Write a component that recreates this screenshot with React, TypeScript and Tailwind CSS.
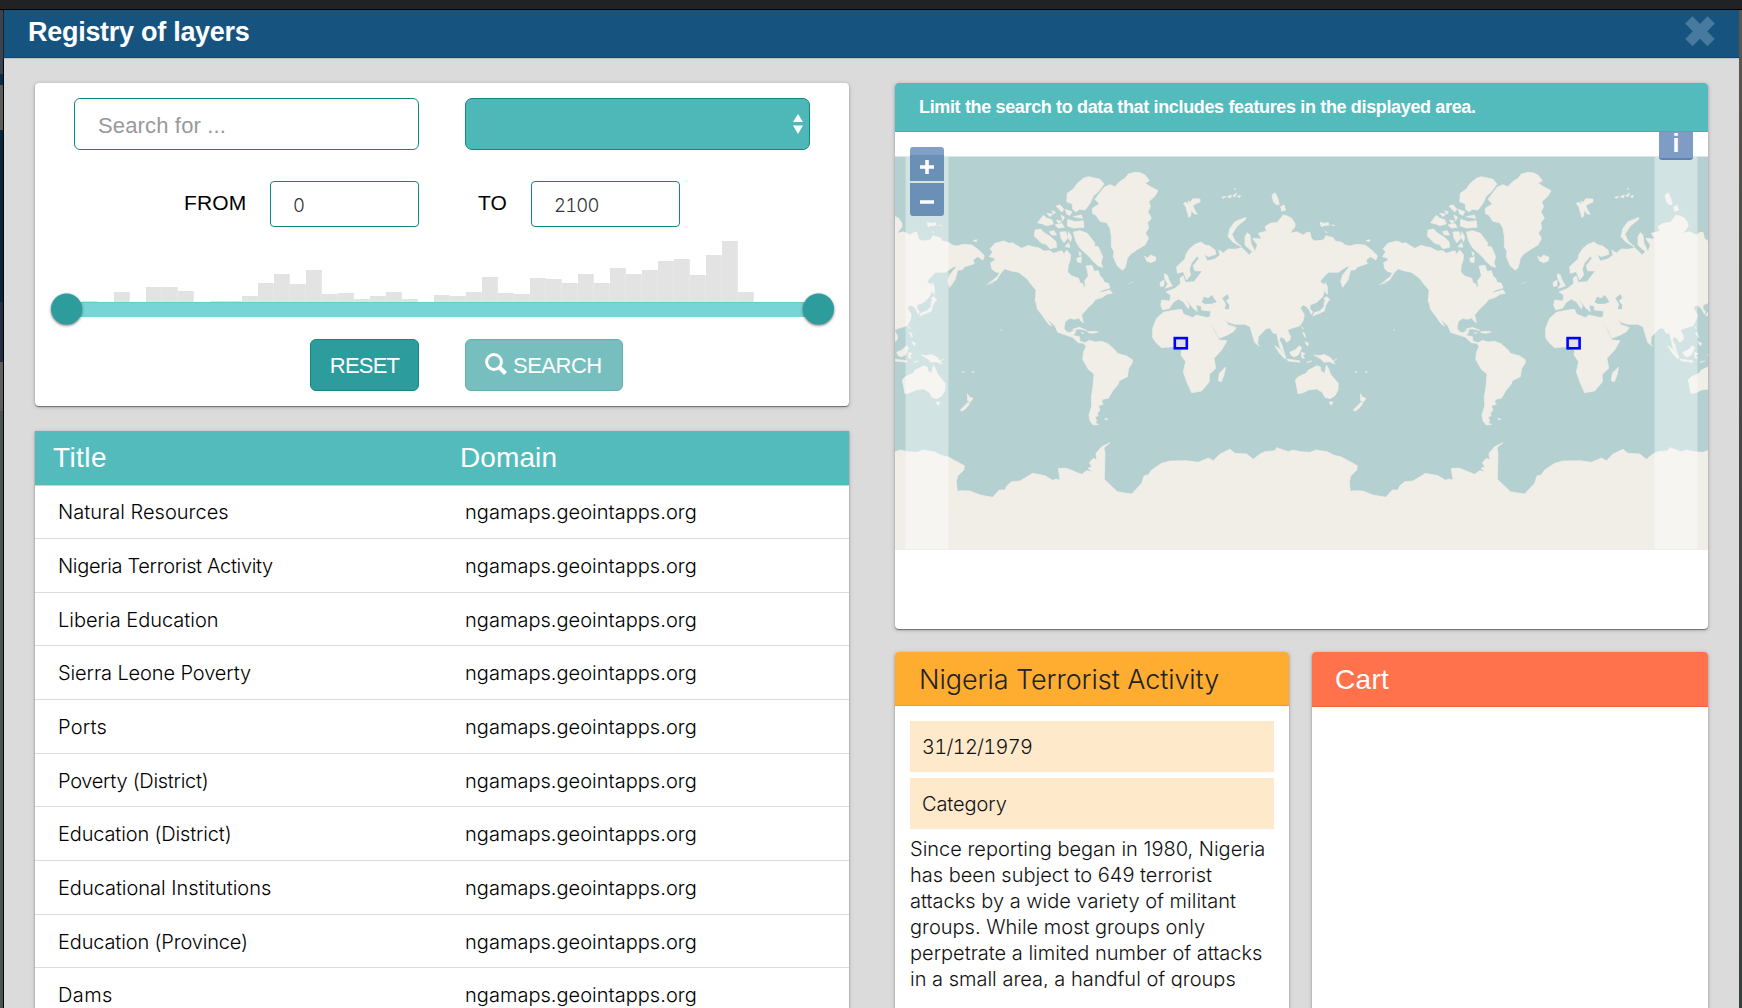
import type { ReactNode } from "react";

const HISTOGRAM = [
  0, 1, 0, 10, 0, 15, 15, 11.5, 0, 1, 1, 6, 19.5, 28.5, 18.5, 32, 8, 9.5, 3.5, 6, 10.5, 3.5, 0, 7, 6, 10, 25, 9, 8,
  24, 23, 19.5, 28.5, 19.5, 34.5, 28.5, 32, 41, 43.5, 27.5, 47, 61.5, 10.5, 0, 0, 0, 0,
];

const LAYERS = [
  { title: "Natural Resources", tracking: "tracking-[0.02px]" },
  { title: "Nigeria Terrorist Activity", tracking: "tracking-[-0.33px]" },
  { title: "Liberia Education", tracking: "tracking-[0px]" },
  { title: "Sierra Leone Poverty", tracking: "tracking-[-0.1px]" },
  { title: "Ports", tracking: "tracking-[0.2px]" },
  { title: "Poverty (District)", tracking: "tracking-[-0.28px]" },
  { title: "Education (District)", tracking: "tracking-[-0.15px]" },
  { title: "Educational Institutions", tracking: "tracking-[-0.03px]" },
  { title: "Education (Province)", tracking: "tracking-[-0.15px]" },
  { title: "Dams", tracking: "tracking-[0.4px]" },
];

const CARD = "bg-white shadow-[0_1px_1px_rgba(0,0,0,0.4),0_1px_4px_rgba(0,0,0,0.25)]";

/* One copy of the world, drawn on a grid of three units per pixel. */
function World() {
  return (
    <g fill="#f1eee8" stroke="#f1eee8" strokeWidth="2" strokeLinejoin="round">
      {/* North America */}
      <path d="M330,566L345,550 372,543 388,550 398,548 410,556 425,565 445,556 458,560 475,563 492,573 510,572 520,580 545,572 552,582 560,570 572,585 570,602 565,615 563,636 575,648 596,655 600,668 609,672 611,684 616,678 614,662 625,648 622,632 618,618 636,616 642,634 655,632 660,648 668,655 672,666 685,670 690,684 668,690 655,700 690,690 697,700 680,703 668,712 648,718 640,726 466,726 468,690 455,675 440,655 415,637 395,633 385,630 375,626 362,640 350,660 325,671 354,648 358,638 345,635 335,626 332,608 346,600 340,593 328,590 338,576z" />
      <path d="M562,400L580,387 592,370 612,354 625,350 640,353 660,358 672,372 655,395 640,408 630,430 615,450 598,448 588,456 578,448 577,432 560,425z" />
      <path d="M580,516L600,512 622,520 645,550 642,558 655,560 668,590 663,608 668,622 655,618 640,605 628,590 615,578 600,565 588,545z" />
      <path d="M465,510L482,507 492,518 512,530 528,545 530,562 510,566 498,553 485,550 470,535 463,528z" />
      <path d="M473,488L490,466 500,474 516,480 520,492 500,497 488,492zM563,478L585,485 610,482 612,502 580,504 562,498zM528,438L540,434 552,448 545,456zM556,448L576,455 570,466 560,462zM543,465L554,472 548,482zM500,460L518,462 510,470zM515,452L526,456 522,463zM540,516L558,515 563,535 552,548 543,535zM525,495L545,490 553,502 535,504zM566,515L575,530 572,545 563,530zM555,560L566,548 570,562zM508,515L522,512 530,525 515,525zM590,595L604,590 603,608 592,605zM580,470L604,465 608,475zM530,480L545,484 535,490zM596,575L604,580 600,588z" />
      {/* Greenland, Iceland */}
      <path d="M672,382L690,374 705,380 718,366 735,355 745,342 765,337 780,338 795,345 808,362 795,370 812,380 834,392 825,408 806,425 812,440 804,455 814,475 803,488 806,505 796,520 806,535 795,555 770,570 752,582 742,595 736,622 727,631 712,618 700,590 702,575 694,560 694,530 690,505 680,488 660,484 648,466 637,460 637,445 658,432 645,418z" />
      <path d="M794,588L802,594 812,585 828,592 826,602 812,608 800,603z" />
      {/* Central and South America */}
      <g transform="translate(0 720)">
        <path d="M466,-5L645,-5 640,8 622,25 605,45 610,68 602,62 597,54 582,58 570,55 556,64 552,85 560,96 570,98 588,87 585,100 578,106 598,110 600,124 616,128 628,121 645,126 665,124 685,132 705,150 712,160 740,168 758,180 756,190 746,205 742,230 718,242 715,252 700,270 685,295 668,298 665,306 670,312 655,318 660,330 652,340 654,348 645,350 650,362 646,370 656,373 640,375 630,362 627,345 635,318 634,290 639,260 642,222 625,208 608,178 611,155 618,140 612,130 595,128 578,112 560,106 533,97 525,78 508,62 498,50 515,78 505,72 488,48 472,27z" />
        <path d="M578,88L598,82 620,91 600,87zM622,95L638,94 655,96 640,100 625,98zM604,98L612,100zM674,356L684,357 678,360z" />
      </g>
      {/* Europe, Asia, Africa and Oceania */}
      <g transform="translate(720 285)">
        <path d="M170,335L195,312 198,298 210,280 225,268 243,261 255,270 268,272 285,285 288,298 265,305 252,298 262,318 285,312 300,300 296,285 310,294 325,282 345,283 365,278 378,290 388,300 397,290 375,270 375,245 382,233 390,240 393,265 405,290 412,270 398,250 425,252 415,235 440,228 435,215 450,205 472,202 490,180 500,182 515,190 525,205 525,215 510,235 530,230 550,240 560,232 570,232 575,252 585,258 610,255 618,242 640,248 645,258 665,262 675,270 690,273 708,268 735,270 755,285 772,302 768,315 752,305 738,315 742,326 712,336 705,345 692,345 684,375 668,397 662,378 668,360 690,333 680,335 665,345 655,352 625,352 612,365 600,380 615,390 616,400 608,425 590,442 570,450 570,462 578,470 574,478 568,465 560,455 550,450 541,458 553,480 550,495 540,512 515,520 502,525 512,545 510,555 500,562 492,550 482,545 478,555 486,570 494,598 480,578 470,535 460,535 450,519 438,521 415,545 413,570 404,562 390,515 375,508 345,508 325,502 313,490 325,510 334,512 349,518 340,530 322,540 297,550 285,525 265,495 262,488 271,484 272,468 245,465 243,452 228,450 232,470 218,458 195,428 208,452 205,462 190,440 175,432 160,442 148,460 128,465 122,450 125,435 150,438 152,420 138,411 165,400 182,385 180,370 190,362 196,382 222,380 247,348 224,347 220,332 237,310 232,303 214,325 208,342 212,360 200,375 190,350 172,355z" />
        <path d="M130,472L160,466 185,463 190,477 218,488 228,480 262,488 280,522 297,555 321,557 305,585 282,610 287,640 268,658 268,680 245,708 215,713 200,680 190,650 197,620 183,600 185,583 160,575 125,578 110,565 98,548 98,520 110,490z" />
        <path d="M298,655L317,636 312,660 304,680 295,677zM133,356L142,360 147,375 157,393 135,400 143,388 134,370zM120,383L132,375 132,392 122,395z" />
        <path d="M190,145L198,142 206,150 204,138 212,142 218,131 240,132 240,141 228,146 218,152 224,165 232,178 222,176 214,166 212,182 207,188 202,172 198,156zM305,127L318,124 312,130zM322,125L334,120 332,129zM338,122L350,114 345,126zM352,124L362,121 358,128zM342,101L348,103zM324,245L330,220 345,200 378,187 376,194 352,213 336,238 345,258 365,276 340,262zM456,120L465,113 473,128 478,148 470,150 460,140zM482,155L492,150 497,165 485,169zM600,202L612,205 625,203 628,210 612,212 604,215zM635,210L645,212zM738,257L750,254 748,260zM615,230L622,232z" />
        <path d="M578,483L583,473 600,468 612,455 613,440 626,436 617,452 613,468 600,474zM612,430L620,425 630,434 618,440zM616,382L622,395 623,418 616,412z" />
        <path d="M464,572L480,583 498,605 495,612 478,594zM500,612L538,617 540,622 505,618zM509,592L525,585 538,572 545,578 535,600 522,606 513,600zM545,592L556,596 548,600 553,610 545,608zM547,532L554,535 556,548zM555,560L566,565 562,573zM545,515L550,522zM582,600L600,602 612,598 632,608 645,627 628,620 612,622 600,610zM650,612L640,618zM560,622L575,618zM412,568L419,573zM705,650L712,652zM735,652L742,650zM820,523L824,526z" />
        <path d="M526,675L535,665 558,655 565,645 580,638 590,632 601,636 603,648 614,655 619,630 625,640 632,658 642,670 655,685 654,705 645,722 630,731 615,727 607,712 590,702 565,705 550,713 534,716z" />
        <path d="M627,741L639,741 634,751zM721,716L728,727 738,730 730,742 722,737zM700,765L724,741 728,746 715,762 704,769z" />
        <g fill="#b5d0d0" stroke="none">
          <path d="M245,442L252,425 265,430 275,420 282,430 290,441 275,446 255,447z" />
          <path d="M307,430L322,418 328,428 318,438 328,450 327,463 314,462 318,448z" />
        </g>
      </g>
      {/* Chains of small islands */}
      <path d="M760,665L745,672M1520,669L1496,674M1345,900L1362,905" fill="none" strokeWidth="1.5" />
      {/* Antarctica */}
      <path
        transform="translate(0 720)"
        d="M228,747L230,575 240,572 270,573 300,585 338,592 358,570 375,570 380,558 395,545 420,543 458,520 495,527 518,541 528,537 540,541 535,505 560,505 585,515 605,523 620,512 637,515 624,505 635,500 628,488 640,475 650,480 648,460 665,440 690,428 672,443 675,460 673,538 712,575 735,579 755,582 785,550 792,528 805,524 815,510 845,490 870,483 920,482 955,487 985,474 1000,482 1020,462 1050,448 1065,460 1100,462 1120,478 1140,462 1155,455 1185,452 1190,443 1225,455 1240,450 1262,455 1289,457 1309,450 1344,456 1360,465 1384,471 1432,497 1430,510 1412,528 1408,545 1411,575 1411,747z"
      />
    </g>
  );
}

function WorldMap() {
  return (
    <svg className="block h-[418px] w-full" viewBox="0 0 813 418" preserveAspectRatio="none">
      <defs>
        <clipPath id="extent">
          <rect x="0" y="24.5" width="813" height="392.8" />
        </clipPath>
      </defs>
      <rect x="0" y="24.5" width="813" height="392.8" fill="#b5d0d0" />
      <g clipPath="url(#extent)">
        {[-408, -15, 378, 771].map((x) => (
          <g key={x} transform={`translate(${x} -72) scale(0.33333)`}>
            <World />
          </g>
        ))}
        <rect x="10.5" y="24" width="43" height="394" fill="#fff" fillOpacity="0.4" />
        <rect x="759.5" y="24" width="43" height="394" fill="#fff" fillOpacity="0.4" />
      </g>
      {[279.8, 672.6].map((x) => (
        <rect key={x} x={x} y="206.1" width="12" height="10.2" fill="#e2dfec" stroke="#00f" strokeWidth="2.6" />
      ))}
    </svg>
  );
}

function YearField({ label, value, labelClass }: { label: string; value: string; labelClass: string }) {
  return (
    <div className="flex items-center">
      <span className={`pb-[3px] text-[21px] text-black ${labelClass}`}>{label}</span>
      <div className="flex h-[46px] w-[149px] items-center rounded-[4px] border-[1.5px] border-[#118785] pt-[4px] pl-[22px] text-[18.5px] font-light text-[#333] font-['Inter']">
        <span className="tracking-[-0.8px] tabular-nums">{value}</span>
      </div>
    </div>
  );
}

function MapButton({ children, className }: { children: ReactNode; className: string }) {
  return <div className={`flex w-[34px] items-center justify-center ${className}`}>{children}</div>;
}

export default function App() {
  return (
    <div className="flex h-[1008px] w-[1742px] flex-col overflow-hidden bg-[#222] font-['Liberation_Sans',Arial,sans-serif]">
      <div className="h-[10px] shrink-0 border-b border-black bg-[#212223]" />
      <div className="flex min-h-0 flex-1">
        <div className="flex w-[4px] shrink-0 flex-col border-r border-black">
          <div className="h-[64px] bg-[#3a444f]" />
          <div className="h-[11px] bg-[#0b2c48]" />
          <div className="h-[45px] bg-[#5d5a57]" />
          <div className="h-[172px] bg-[#0a243c]" />
          <div className="h-[60px] bg-[#1f3043]" />
          <div className="h-[49px] bg-[#5f5d5b]" />
          <div className="flex-1 bg-[#48524f]" />
        </div>

        <div className="flex w-[1735px] shrink-0 flex-col bg-[#dbdbdb]">
          <header className="flex h-[48px] shrink-0 items-center justify-between border-b border-[#0a4577] bg-[#16547f] pr-[24px] pl-[24px] shadow-[0_1px_1px_#c4c4c4]">
            <h1 className="pb-[2px] text-[27px] font-bold tracking-[-0.28px] text-white">Registry of layers</h1>
            <svg className="mb-[6px] h-[30px] w-[30px]" viewBox="0 0 30 30">
              <path
                d="M7.5 .8L15 8.4 22.5.8 29.3 7.4 21.8 15.3 29.3 23 22.5 29.8 15 22.2 7.5 29.8.7 23 8.2 15.3.7 7.4z"
                fill="#477a9e"
                stroke="#477a9e"
                strokeLinejoin="round"
              />
            </svg>
          </header>

          <div className="flex gap-[46px] pt-[25px] pl-[31px]">
            <div className="w-[814px] shrink-0">
              <section className={`mb-[25px] flex h-[323px] flex-col rounded-[4px] pt-[15px] ${CARD}`}>
                <div className="flex gap-[46px] pl-[39px]">
                  <div className="flex h-[52px] w-[345px] items-center rounded-[6px] border-[1.5px] border-[#118785] pt-[3px] pl-[23px] text-[22px] tracking-[0.15px] text-[#999]">
                    Search for ...
                  </div>
                  <div className="flex h-[52px] w-[345px] items-center justify-end rounded-[7px] border-[1.5px] border-[#118785] bg-[#4eb8b9] pr-[6px]">
                    <svg className="h-[20px] w-[10px]" viewBox="0 0 10 20" fill="#fff">
                      <path d="M5 0L10 8H0zM5 20L0 11.5H10z" />
                    </svg>
                  </div>
                </div>
                <div className="mt-[31px] flex gap-[59px] pl-[149px]">
                  <YearField label="FROM" value="0" labelClass="w-[86px] tracking-[0.1px]" />
                  <YearField label="TO" value="2100" labelClass="w-[53px] tracking-[0px]" />
                </div>
                <div className="mt-[13px] flex h-[62px] items-end pl-[31px]">
                  {HISTOGRAM.map((h, i) => (
                    <div key={i} className="w-[16px] border-r border-[#e8e8e8] bg-[#e3e3e3]" style={{ height: h }} />
                  ))}
                </div>
                <div className="ml-[31px] flex h-[15px] w-[752px] items-center justify-between border-t border-[#6cc9c9] bg-[#77d5d5]">
                  <div className="-ml-[15.5px] h-[31px] w-[31px] -translate-y-[1.5px] rounded-full bg-[#2d9c9c] shadow-[0_1px_3px_rgba(0,0,0,0.55)]" />
                  <div className="-mr-[15.5px] h-[31px] w-[31px] -translate-y-[1.5px] rounded-full bg-[#2d9c9c] shadow-[0_1px_3px_rgba(0,0,0,0.55)]" />
                </div>
                <div className="mt-[22px] flex gap-[46px] pl-[275px] text-[22px] tracking-[-0.8px] text-white">
                  <button className="h-[52px] w-[109px] rounded-[6px] border border-[#118785] bg-[#2d9c9c]">
                    RESET
                  </button>
                  <button className="flex h-[52px] w-[158px] items-center rounded-[6px] border border-[#5fb0b0] bg-[#77bebe] pl-[19px]">
                    <svg className="mr-[6px] mb-[2px] h-[22px] w-[22px]" viewBox="0 0 22 22" fill="none" stroke="#fff">
                      <circle cx="9" cy="9" r="7.4" strokeWidth="3" />
                      <path d="M14.5 14.5L20.5 20.5" strokeWidth="4" />
                    </svg>
                    <span className="tracking-[-0.5px]">SEARCH</span>
                  </button>
                </div>
              </section>

              <section className={CARD}>
                <div className="flex h-[54.5px] items-center border-b border-[#c5d5d5] bg-[#54bbbd] pt-[1px] text-[28px] text-white">
                  <div className="w-[407px] pl-[18px] tracking-[0.4px]">Title</div>
                  <div className="pl-[18px] tracking-[0.1px]">Domain</div>
                </div>
                {LAYERS.map(({ title, tracking }) => (
                  <div
                    key={title}
                    className="flex h-[53.67px] items-center border-b-[1.5px] border-[#dcdcdc] font-['Inter'] text-[20px] font-light text-black"
                  >
                    <div className={`w-[407px] pt-[1px] pl-[23px] ${tracking}`}>{title}</div>
                    <div className="pt-[1px] pl-[23px] tracking-[0.03px]">ngamaps.geointapps.org</div>
                  </div>
                ))}
              </section>
            </div>

            <div className="w-[813px] shrink-0">
              <section className={`mb-[23px] h-[546px] overflow-hidden rounded-[4px] ${CARD}`}>
                <div className="flex h-[49px] items-center border-b border-[#45b0b2] bg-[#54bbbd] pt-[1px] pl-[24px] text-[18px] font-bold tracking-[-0.35px] text-white">
                  Limit the search to data that includes features in the displayed area.
                </div>
                <div className="relative h-[497px]">
                  <WorldMap />
                  <div className="absolute top-[15px] left-[15px] flex flex-col gap-[2px]">
                    <MapButton className="h-[34px] rounded-t-[3px] bg-linear-to-b from-[#829fc6] from-25% to-[#6b90b7] to-25%">
                      <svg className="mt-[5px] h-[14px] w-[14px]" viewBox="0 0 14 14" stroke="#fff" strokeWidth="3.6">
                        <path d="M0 7H14M7 0V14" />
                      </svg>
                    </MapButton>
                    <MapButton className="h-[33px] rounded-b-[3px] bg-[#6b90b7]">
                      <svg className="mt-[4px] h-[14px] w-[14px]" viewBox="0 0 14 14" stroke="#fff" strokeWidth="3.6">
                        <path d="M0 7H14" />
                      </svg>
                    </MapButton>
                  </div>
                  <div className="absolute top-0 left-[764px]">
                    <MapButton className="h-[28px] rounded-b-[3px] border-b-2 border-[#6284b4] bg-[#7f9cc5] pb-[4px] text-[25px] leading-none font-bold text-white">
                      i
                    </MapButton>
                  </div>
                </div>
              </section>

              <div className="flex justify-between">
                <section className={`h-[400px] w-[394px] rounded-[4px] ${CARD}`}>
                  <h2 className="flex h-[54px] items-center rounded-t-[4px] border-b border-[#ef9d1c] bg-[#ffad31] pt-[3px] pl-[24px] font-['Inter'] text-[27px] font-light tracking-[-0.06px] text-[#222]">
                    Nigeria Terrorist Activity
                  </h2>
                  <div className="flex flex-col gap-[6px] px-[15px] pt-[15px] font-['Inter'] text-[20px] font-light text-[#111]">
                    <div className="flex h-[51px] items-center bg-[#ffe9cb] pt-[1px] pl-[12px] tracking-[-0.72px] tabular-nums">
                      31/12/1979
                    </div>
                    <div className="flex h-[51px] items-center bg-[#ffe9cb] pt-[1px] pl-[12px] tracking-[-0.1px]">
                      Category
                    </div>
                    <p className="h-[153px] overflow-hidden pt-[1px] leading-[26.1px] whitespace-nowrap">
                      Since reporting began in 1980, Nigeria
                      <br />
                      has been subject to 649 terrorist
                      <br />
                      attacks by a wide variety of militant
                      <br />
                      groups. While most groups only
                      <br />
                      perpetrate a limited number of attacks
                      <br />
                      in a small area, a handful of groups
                    </p>
                  </div>
                </section>
                <section className={`h-[400px] w-[396px] rounded-[4px] ${CARD}`}>
                  <h2 className="flex h-[55px] items-center rounded-t-[4px] border-b border-[#e8643f] bg-[#ff724c] pt-[1px] pl-[23px] text-[28px] tracking-[0.3px] text-white">
                    Cart
                  </h2>
                </section>
              </div>
            </div>
          </div>
        </div>
        <div className="flex-1 bg-linear-to-b from-[#5a564f] via-[#444] to-[#36403f]" />
      </div>
    </div>
  );
}
